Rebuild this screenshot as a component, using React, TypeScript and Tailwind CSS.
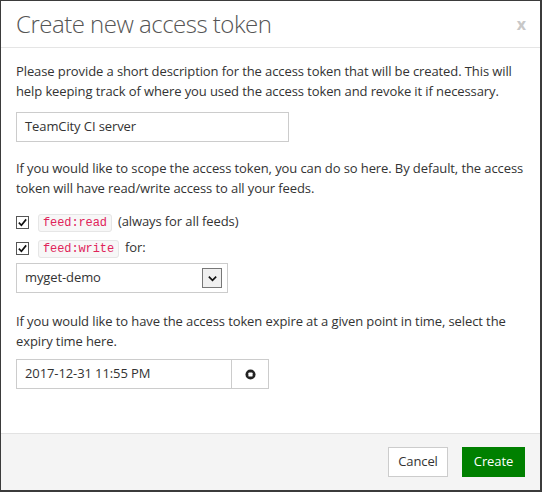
import { useState } from 'react';

function Check() {
    return (
        <span className="inline-flex h-[13px] w-[13px] items-center justify-center border border-[#555] bg-white">
            <svg viewBox="0 0 12 12" className="h-[11px] w-[11px]">
                <path d="M2 6.2 L4.8 9 L10 2.6" fill="none" stroke="#111" strokeWidth="1.8" />
            </svg>
        </span>
    );
}

function Code({ children }: { children: string }) {
    return (
        <code className="rounded-[3px] border border-[#e6e6e6] bg-[#f7f7f7] px-[4px] py-[1px] font-['Liberation_Mono',monospace] text-[12px] text-[#e0245a]">
            {children}
        </code>
    );
}

export default function App() {
    const [desc] = useState('TeamCity CI server');

    return (
        <div className="h-[492px] w-[542px] border-l border-t border-r-2 border-b-2 border-[#3b3b3b] bg-white font-['Open_Sans',sans-serif] text-[13px] tracking-[-0.1px] text-[#333]">
            <div className="flex h-[47px] items-start justify-between border-b border-[#e5e5e5] pl-[15px] pr-[14px] pt-[6px]">
                <h1 className="text-[24px] font-light leading-[34px] tracking-[-0.5px] text-[#555]">Create new access token</h1>
                <span className="mt-[5px] text-[16px] font-bold text-[#c8c8c8]">x</span>
            </div>

            <div className="h-[385px] px-[15px] pt-[13px]">
                <p className="leading-[20px]">
                    Please provide a short description for the access token that will be created. This will help keeping track of where you used the access token and revoke it if necessary.
                </p>
                <div className="mt-[11px] flex h-[30px] w-[273px] items-center border border-[#ccc] px-[8px]">{desc}</div>

                <p className="mt-[16px] leading-[20px]">
                    If you would like to scope the access token, you can do so here. By default, the access token will have read/write access to all your feeds.
                </p>

                <div className="mt-[14px] flex h-[20px] items-center gap-[6px]">
                    <Check />
                    <span className="ml-[3px]"><Code>feed:read</Code></span>
                    <span>(always for all feeds)</span>
                </div>
                <div className="mt-[6px] flex h-[20px] items-center gap-[6px]">
                    <Check />
                    <span className="ml-[3px]"><Code>feed:write</Code></span>
                    <span>for:</span>
                </div>
                <div className="mt-[5px] flex h-[30px] w-[212px] items-center justify-between border border-[#ccc] pl-[8px] pr-[5px]">
                    <span>myget-demo</span>
                    <span className="flex h-[20px] w-[20px] items-center justify-center border border-[#777] bg-[#f0f0f0]">
                        <svg viewBox="0 0 12 12" className="h-[11px] w-[11px]">
                            <path d="M2 4 L6 8 L10 4" fill="none" stroke="#111" strokeWidth="1.8" />
                        </svg>
                    </span>
                </div>

                <p className="mt-[18px] leading-[20px]">
                    If you would like to have the access token expire at a given point in time, select the expiry time here.
                </p>
                <div className="mt-[8px] flex h-[30px] w-[253px] border border-[#ccc]">
                    <div className="flex flex-1 items-center px-[8px]">2017-12-31 11:55 PM</div>
                    <div className="flex w-[37px] items-center justify-center border-l border-[#ccc]">
                        <svg viewBox="0 0 12 12" className="h-[11px] w-[11px]">
                            <circle cx="6" cy="6" r="5.5" fill="#222" />
                            <rect x="3.7" y="3.7" width="4.6" height="4.6" rx="1" fill="#fff" />
                        </svg>
                    </div>
                </div>
            </div>

            <div className="flex h-[57px] items-center justify-end gap-[14px] border-t border-[#e2e2e2] bg-[#f4f4f4] pr-[15px]">
                <button className="h-[30px] w-[60px] border border-[#ccc] bg-white text-[#333]">Cancel</button>
                <button className="h-[30px] w-[63px] bg-[#008000] text-white">Create</button>
            </div>
        </div>
    );
}
